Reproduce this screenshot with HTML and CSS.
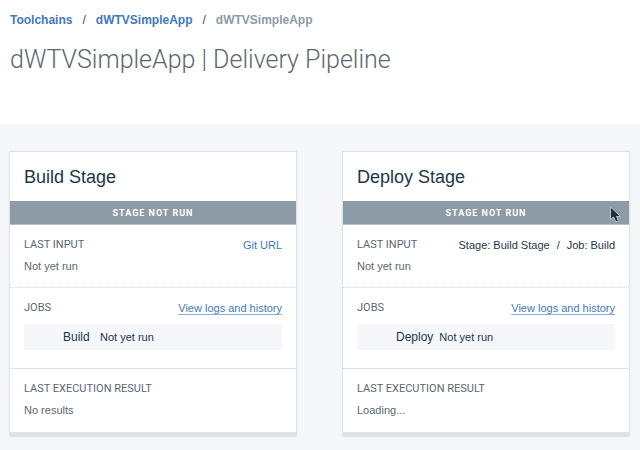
FILE: index.html
```html
<!DOCTYPE html>
<html lang="en">
<head>
<meta charset="utf-8">
<title>dWTVSimpleApp | Delivery Pipeline</title>
<link rel="stylesheet" href="styles.css">
</head>
<body>
<header class="page-header">
  <nav class="breadcrumb" aria-label="Breadcrumb">
    <a href="#">Toolchains</a>
    <span class="separator">/</span>
    <a href="#">dWTVSimpleApp</a>
    <span class="separator">/</span>
    <span class="current">dWTVSimpleApp</span>
  </nav>
  <h1 class="page-title">dWTVSimpleApp | Delivery Pipeline</h1>
</header>
<main class="pipeline">
  <article class="stage">
    <h2 class="stage-name">Build Stage</h2>
    <div class="stage-status">STAGE NOT RUN</div>
    <section class="panel input-panel">
      <div class="panel-head">
        <h3 class="label">LAST INPUT</h3>
        <a class="git-link" href="#">Git URL</a>
      </div>
      <p class="value">Not yet run</p>
    </section>
    <section class="panel jobs-panel">
      <div class="panel-head">
        <h3 class="label">JOBS</h3>
        <a class="logs-link" href="#">View logs and history</a>
      </div>
      <div class="job"><span class="job-name">Build</span><span class="job-status">Not yet run</span></div>
    </section>
    <section class="panel result-panel">
      <h3 class="label">LAST EXECUTION RESULT</h3>
      <p class="value">No results</p>
    </section>
  </article>
  <article class="stage">
    <h2 class="stage-name">Deploy Stage</h2>
    <div class="stage-status">STAGE NOT RUN
      <svg class="pointer" width="14" height="18" viewBox="0 0 14 18" aria-hidden="true"><path d="M1.500 1V13.500L4.500 11L7 16L9.500 14.800L7.500 10.500H11.500Z" fill="#1d3040" stroke="#b9c3c9" stroke-width="1"/></svg>
    </div>
    <section class="panel input-panel">
      <div class="panel-head">
        <h3 class="label">LAST INPUT</h3>
        <div class="source"><span>Stage: Build Stage</span><span>/</span><span>Job: Build</span></div>
      </div>
      <p class="value">Not yet run</p>
    </section>
    <section class="panel jobs-panel">
      <div class="panel-head">
        <h3 class="label">JOBS</h3>
        <a class="logs-link" href="#">View logs and history</a>
      </div>
      <div class="job"><span class="job-name">Deploy</span><span class="job-status">Not yet run</span></div>
    </section>
    <section class="panel result-panel">
      <h3 class="label">LAST EXECUTION RESULT</h3>
      <p class="value">Loading...</p>
    </section>
  </article>
</main>
</body>
</html>
```
FILE: styles.css
```css
* {
  box-sizing: border-box;
}

body {
  margin: 0;
  min-height: 100vh;
  display: flex;
  flex-direction: column;
  background: #fff;
  color: #5a6872;
  font: 11px/16px "Liberation Sans", Arial, sans-serif;
}

h1, h2, h3, p {
  margin: 0;
  font-weight: 400;
}

a {
  color: #4178be;
  text-decoration: none;
}

.page-header {
  padding: 12px 10px 48px;
}

.breadcrumb {
  display: flex;
  gap: 10px;
  font-size: 12px;
  font-weight: 700;
}

.separator {
  font-weight: 400;
  color: #3c4b57;
}

.current {
  color: #8c9ba5;
}

.page-title {
  margin-top: 16px;
  font-family: Roboto, "Liberation Sans", sans-serif;
  font-size: 25px;
  font-weight: 300;
  line-height: 32px;
}

.pipeline {
  flex: 1;
  display: grid;
  grid-template-columns: 1fr 1fr;
  gap: 45px;
  align-items: start;
  padding: 27px 10px 13px 9px;
  background: #f5f7fa;
}

.stage {
  background: #fff;
  border: 1px solid #dfe3e6;
  border-bottom-width: 5px;
  border-radius: 0 0 3px 3px;
  box-shadow: 0 0 2px #e4e7eb;
}

.stage-name {
  padding: 13px 14px 11px;
  color: #1d3649;
  font-size: 18px;
  line-height: 25px;
}

.stage-status {
  position: relative;
  height: 24px;
  border-bottom: 1px solid #b4bfc8;
  background: #8c9ba5;
  color: #fff;
  font-family: Roboto, "Liberation Sans", sans-serif;
  font-size: 9px;
  font-weight: 700;
  line-height: 24px;
  letter-spacing: 1px;
  text-align: center;
}

.pointer {
  position: absolute;
  top: 5px;
  right: 6px;
}

.panel {
  padding: 0 14px;
}

.panel + .panel {
  border-top: 1px solid #dfe3e6;
}

.input-panel + .jobs-panel {
  border-top: 1px dotted #d5dae0;
}

.panel-head {
  display: flex;
  justify-content: space-between;
}

.label {
  font-family: Roboto, "Liberation Sans", sans-serif;
  font-size: 11px;
}

.value {
  margin-top: 5px;
}

.input-panel {
  padding-top: 12px;
  padding-bottom: 13px;
}

.jobs-panel {
  padding-top: 12px;
  padding-bottom: 18px;
}

.result-panel {
  padding-top: 12px;
  padding-bottom: 14px;
}

.source {
  display: flex;
  gap: 7px;
  color: #1d3649;
}

.logs-link {
  text-decoration: underline;
  text-decoration-color: #8fadd6;
  text-underline-offset: 2px;
}

.job {
  display: grid;
  grid-template-columns: auto 1fr;
  gap: 6px;
  align-items: center;
  height: 26px;
  margin-top: 8px;
  padding-left: 39px;
  background: #f5f7fa;
  color: #1d3649;
}

.job-name {
  min-width: 31px;
  font-size: 12px;
}
```
